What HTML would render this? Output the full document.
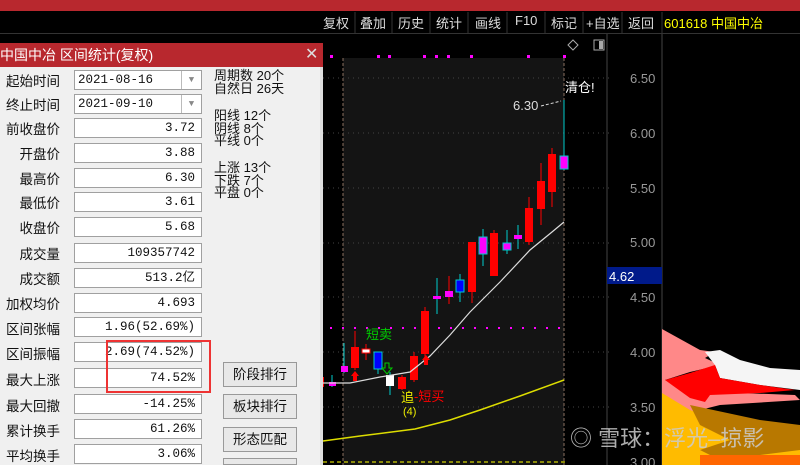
<!DOCTYPE html>
<html style="overflow:hidden;width:800px;height:465px"><head><meta charset="utf-8"><style>
*{margin:0;padding:0;box-sizing:border-box}
body{width:800px;height:465px;overflow:hidden;background:#000;position:relative;font-family:"Liberation Sans","Noto Sans CJK SC",sans-serif}
.abs{position:absolute}
#top{left:0;top:0;width:800px;height:11px;background:#b8282e}
#tb{left:320px;top:11px;height:22px;width:480px;color:#ddd;font-size:13px}
#tb span{position:absolute;top:2px}
.dlg{left:0;top:43px;width:323px;height:422px;background:#f0f0f0}
.title{left:0;top:43px;width:323px;height:24px;background:#b8282e;color:#fff;font-size:14px;line-height:24px}
.lbl{position:absolute;font-size:13.5px;color:#111;text-align:right;width:70px}
.box{position:absolute;left:74px;width:128px;height:20px;background:#fff;border:1px solid #a0a0a0;font-family:"Liberation Mono","Noto Sans CJK SC",monospace;font-size:12.5px;text-align:right;padding-right:6px;line-height:18px;color:#111}
.btn{position:absolute;left:223px;width:74px;height:25px;background:#e8e8e8;border:1px solid #999;font-size:13.5px;text-align:center;line-height:23px;color:#111}
.st{position:absolute;left:214px;font-size:13px;line-height:12.5px;color:#111}
</style></head><body>
<div class="abs" id="top"></div>
<div class="abs" style="left:0;top:33px;width:800px;height:1px;background:#333"></div>
<div class="abs" id="tb">
<span style="left:3px">复权</span><span style="left:40px">叠加</span><span style="left:78px">历史</span><span style="left:116px">统计</span><span style="left:155px">画线</span><span style="left:195px">F10</span><span style="left:231px">标记</span><span style="left:266px">+自选</span><span style="left:308px">返回</span>
<span style="left:344px;color:#ff0">601618 中国中冶</span>
</div>
<svg class="abs" style="left:0;top:0" width="800" height="465">
<g stroke="#333"><line x1="355" y1="12" x2="355" y2="33"/><line x1="392" y1="12" x2="392" y2="33"/><line x1="430" y1="12" x2="430" y2="33"/><line x1="468" y1="12" x2="468" y2="33"/><line x1="507" y1="12" x2="507" y2="33"/><line x1="545" y1="12" x2="545" y2="33"/><line x1="583" y1="12" x2="583" y2="33"/><line x1="622" y1="12" x2="622" y2="33"/><line x1="662" y1="12" x2="662" y2="33"/></g>
<rect x="343" y="58" width="221" height="407" fill="#141414"/>
<g stroke="#8a7060" stroke-dasharray="3,2"><line x1="343" y1="58" x2="343" y2="465"/><line x1="564" y1="58" x2="564" y2="465"/></g>
<g stroke="#444" stroke-dasharray="1,4"><line x1="323" y1="78" x2="610" y2="78"/><line x1="323" y1="133" x2="610" y2="133"/><line x1="323" y1="188" x2="610" y2="188"/><line x1="323" y1="243" x2="610" y2="243"/><line x1="323" y1="297" x2="610" y2="297"/><line x1="323" y1="352" x2="610" y2="352"/><line x1="323" y1="407" x2="610" y2="407"/></g>
<line x1="607" y1="34" x2="607" y2="465" stroke="#444"/><line x1="662" y1="34" x2="662" y2="465" stroke="#444"/>
<line x1="330" y1="328" x2="566" y2="328" stroke="#f0f" stroke-dasharray="2,10" stroke-width="2"/>
<g fill="#f0f"><rect x="330" y="55" width="3" height="3"/><rect x="377" y="55" width="3" height="3"/><rect x="388" y="55" width="3" height="3"/><rect x="423" y="55" width="3" height="3"/><rect x="435" y="55" width="3" height="3"/><rect x="447" y="55" width="3" height="3"/><rect x="470" y="55" width="3" height="3"/><rect x="527" y="55" width="3" height="3"/><rect x="563" y="55" width="3" height="3"/></g>
<line x1="323" y1="462" x2="566" y2="462" stroke="#ff0" stroke-dasharray="4,3"/>
<path d="M568 45 l5 -5 l5 5 l-5 5z" fill="none" stroke="#aaa"/>
<rect x="594" y="40" width="10" height="10" fill="none" stroke="#aaa"/><rect x="599" y="41" width="4" height="8" fill="#aaa"/>
<g font-size="13" fill="#999"><text x="630" y="83">6.50</text><text x="630" y="138">6.00</text><text x="630" y="193">5.50</text><text x="630" y="247">5.00</text><text x="630" y="302">4.50</text><text x="630" y="357">4.00</text><text x="630" y="412">3.50</text><text x="630" y="467">3.00</text></g>
<rect x="607" y="267" width="55" height="17" fill="#001a8a"/><text x="609" y="281" font-size="13" fill="#fff">4.62</text>
<g stroke-width="1">
<g stroke="#0cc"><line x1="344" y1="343" x2="344" y2="373"/><line x1="437" y1="278" x2="437" y2="314"/><line x1="483" y1="229" x2="483" y2="266"/><line x1="507" y1="230" x2="507" y2="254"/><line x1="518" y1="225" x2="518" y2="249"/><line x1="564" y1="100" x2="564" y2="170"/><line x1="332" y1="375" x2="332" y2="387"/><line x1="378" y1="352" x2="378" y2="374"/><line x1="390" y1="372" x2="390" y2="395"/><line x1="460" y1="274" x2="460" y2="302"/></g>
<g stroke="#f00"><line x1="355" y1="331" x2="355" y2="370"/><line x1="366" y1="344" x2="366" y2="360"/><line x1="414" y1="352" x2="414" y2="382"/><line x1="425" y1="307" x2="425" y2="358"/><line x1="449" y1="276" x2="449" y2="304"/><line x1="472" y1="242" x2="472" y2="303"/><line x1="494" y1="230" x2="494" y2="276"/><line x1="529" y1="197" x2="529" y2="245"/><line x1="541" y1="163" x2="541" y2="225"/><line x1="552" y1="148" x2="552" y2="207"/><line x1="402" y1="375" x2="402" y2="390"/></g>
</g>
<g>
<rect x="320" y="377" width="4" height="10" fill="#f00"/>
<rect x="329" y="382" width="7" height="4" fill="#f0f"/>
<rect x="341" y="366" width="7" height="6" fill="#f0f"/>
<rect x="351" y="347" width="8" height="21" fill="#f00"/>
<rect x="362" y="349" width="8" height="4" fill="#fff" stroke="#f00"/>
<rect x="374" y="352" width="8" height="17" fill="#00f" stroke="#0cc"/>
<rect x="386" y="375" width="8" height="11" fill="#fff"/>
<rect x="398" y="377" width="8" height="12" fill="#f00"/>
<rect x="410" y="356" width="8" height="24" fill="#f00"/>
<rect x="421" y="311" width="8" height="43" fill="#f00"/>
<rect x="433" y="296" width="8" height="3" fill="#f0f"/>
<rect x="445" y="291" width="8" height="6" fill="#f0f"/>
<rect x="456" y="280" width="8" height="12" fill="#00f" stroke="#0cc"/>
<rect x="468" y="242" width="8" height="50" fill="#f00"/>
<rect x="479" y="237" width="8" height="17" fill="#f0f" stroke="#0cc"/>
<rect x="490" y="233" width="8" height="43" fill="#f00"/>
<rect x="503" y="243" width="8" height="7" fill="#f0f" stroke="#0cc"/>
<rect x="514" y="235" width="8" height="4" fill="#f0f"/>
<rect x="525" y="208" width="8" height="34" fill="#f00"/>
<rect x="537" y="181" width="8" height="28" fill="#f00"/>
<rect x="548" y="154" width="8" height="38" fill="#f00"/>
<rect x="560" y="156" width="8" height="13" fill="#f0f" stroke="#0cc"/>
</g>
<path d="M323 383 L350 383 L380 377 L410 372 L430 356 L450 335 L470 312 L500 282 L530 250 L552 232 L564 222" fill="none" stroke="#ddd" stroke-width="1.2"/>
<path d="M323 441 L360 436 L415 429 L450 420 L480 410 L520 396 L564 380" fill="none" stroke="#dd0" stroke-width="1.5"/>
<path d="M351 376 l4 -5 l4 5 h-2 v5 h-4 v-5z M422 360 l4 -5 l4 5 h-2 v5 h-4 v-5z" fill="#f00"/>
<path d="M385 363 h4 v5 h3 l-5 6 l-5 -6 h3z" fill="none" stroke="#0c0"/>
<text x="366" y="339" font-size="13" fill="#0c0">短卖</text>
<text x="401" y="402" font-size="13" fill="#ee0">追</text>
<text x="403" y="415" font-size="11" fill="#ee0">(4)</text>
<text x="414" y="401" font-size="13" fill="#f00">-短买</text>
<text x="513" y="110" font-size="13" fill="#ddd">6.30</text>
<path d="M541 106 L561 101" stroke="#ddd" stroke-dasharray="3,2"/>
<text x="565" y="92" font-size="13" fill="#fff">清仓!</text>
<polygon points="662,329 700,350 715,352 705,358 720,365 690,372 665,380 700,385 740,393 795,395 800,400 720,405 700,410 740,418 780,425 800,428 800,465 662,465" fill="#f88"/>
<polygon points="705,352 720,350 740,360 770,368 800,370 800,390 760,385 720,378 715,365" fill="#f5f5f5"/>
<polygon points="665,380 690,373 715,365 720,378 760,385 795,390 760,393 710,395 705,402 690,398" fill="#f00"/>
<polygon points="662,393 690,410 730,425 770,430 800,432 800,465 662,465" fill="#fb0"/>
<polygon points="690,405 760,420 800,425 800,450 760,455 720,460 700,450 730,440 700,425" fill="#b87800"/>
<polygon points="700,455 760,455 800,455 800,465 700,465" fill="#f60"/>
<text x="570" y="446" font-size="22" fill="#ccc" opacity=".85">◎ 雪球：浮光–掠影</text>
</svg>
<div class="abs dlg"></div>
<div class="abs" style="left:320px;top:43px;width:3px;height:422px;background:#ddd"></div>
<div class="abs title">中国中冶 区间统计(复权)<span style="position:absolute;left:305px;top:0;font-size:16px;color:#ddd">✕</span></div>
<div style="position:absolute;left:0;top:0;width:323px;height:465px;overflow:hidden">
<div class="lbl" style="left:-10px;top:70px">起始时间</div><div class="box" style="top:70px;text-align:left;padding-left:3px">2021-08-16<span style="position:absolute;right:0;top:0;width:20px;height:18px;border-left:1px solid #bbb;text-align:center;color:#888;font-size:9px">▼</span></div>
<div class="lbl" style="left:-10px;top:94px">终止时间</div><div class="box" style="top:94px;text-align:left;padding-left:3px">2021-09-10<span style="position:absolute;right:0;top:0;width:20px;height:18px;border-left:1px solid #bbb;text-align:center;color:#888;font-size:9px">▼</span></div>
<div class="lbl" style="left:-10px;top:118px">前收盘价</div><div class="box" style="top:118px">3.72</div>
<div class="lbl" style="left:-10px;top:143px">开盘价</div><div class="box" style="top:143px">3.88</div>
<div class="lbl" style="left:-10px;top:168px">最高价</div><div class="box" style="top:168px">6.30</div>
<div class="lbl" style="left:-10px;top:192px">最低价</div><div class="box" style="top:192px">3.61</div>
<div class="lbl" style="left:-10px;top:217px">收盘价</div><div class="box" style="top:217px">5.68</div>
<div class="lbl" style="left:-10px;top:243px">成交量</div><div class="box" style="top:243px">109357742</div>
<div class="lbl" style="left:-10px;top:268px">成交额</div><div class="box" style="top:268px">513.2亿</div>
<div class="lbl" style="left:-10px;top:293px">加权均价</div><div class="box" style="top:293px">4.693</div>
<div class="lbl" style="left:-10px;top:318px">区间张幅</div><div class="box" style="top:317px">1.96(52.69%)</div>
<div class="lbl" style="left:-10px;top:343px">区间振幅</div><div class="box" style="top:342px">2.69(74.52%)</div>
<div class="lbl" style="left:-10px;top:369px">最大上涨</div><div class="box" style="top:368px">74.52%</div>
<div class="lbl" style="left:-10px;top:395px">最大回撤</div><div class="box" style="top:394px">-14.25%</div>
<div class="lbl" style="left:-10px;top:420px">累计换手</div><div class="box" style="top:419px">61.26%</div>
<div class="lbl" style="left:-10px;top:445px">平均换手</div><div class="box" style="top:444px">3.06%</div>
<div style="position:absolute;left:106px;top:340px;width:105px;height:53px;border:2px solid #e33"></div>
<div class="btn" style="top:362px">阶段排行</div>
<div class="btn" style="top:394px">板块排行</div>
<div class="btn" style="top:427px">形态匹配</div>
<div class="btn" style="top:458px;height:7px"></div>
<div class="st" style="top:70px">周期数 20个<br>自然日 26天</div>
<div class="st" style="top:110px">阳线 12个<br>阴线 8个<br>平线 0个</div>
<div class="st" style="top:162px">上涨 13个<br>下跌 7个<br>平盘 0个</div>
</div>
</body></html>
